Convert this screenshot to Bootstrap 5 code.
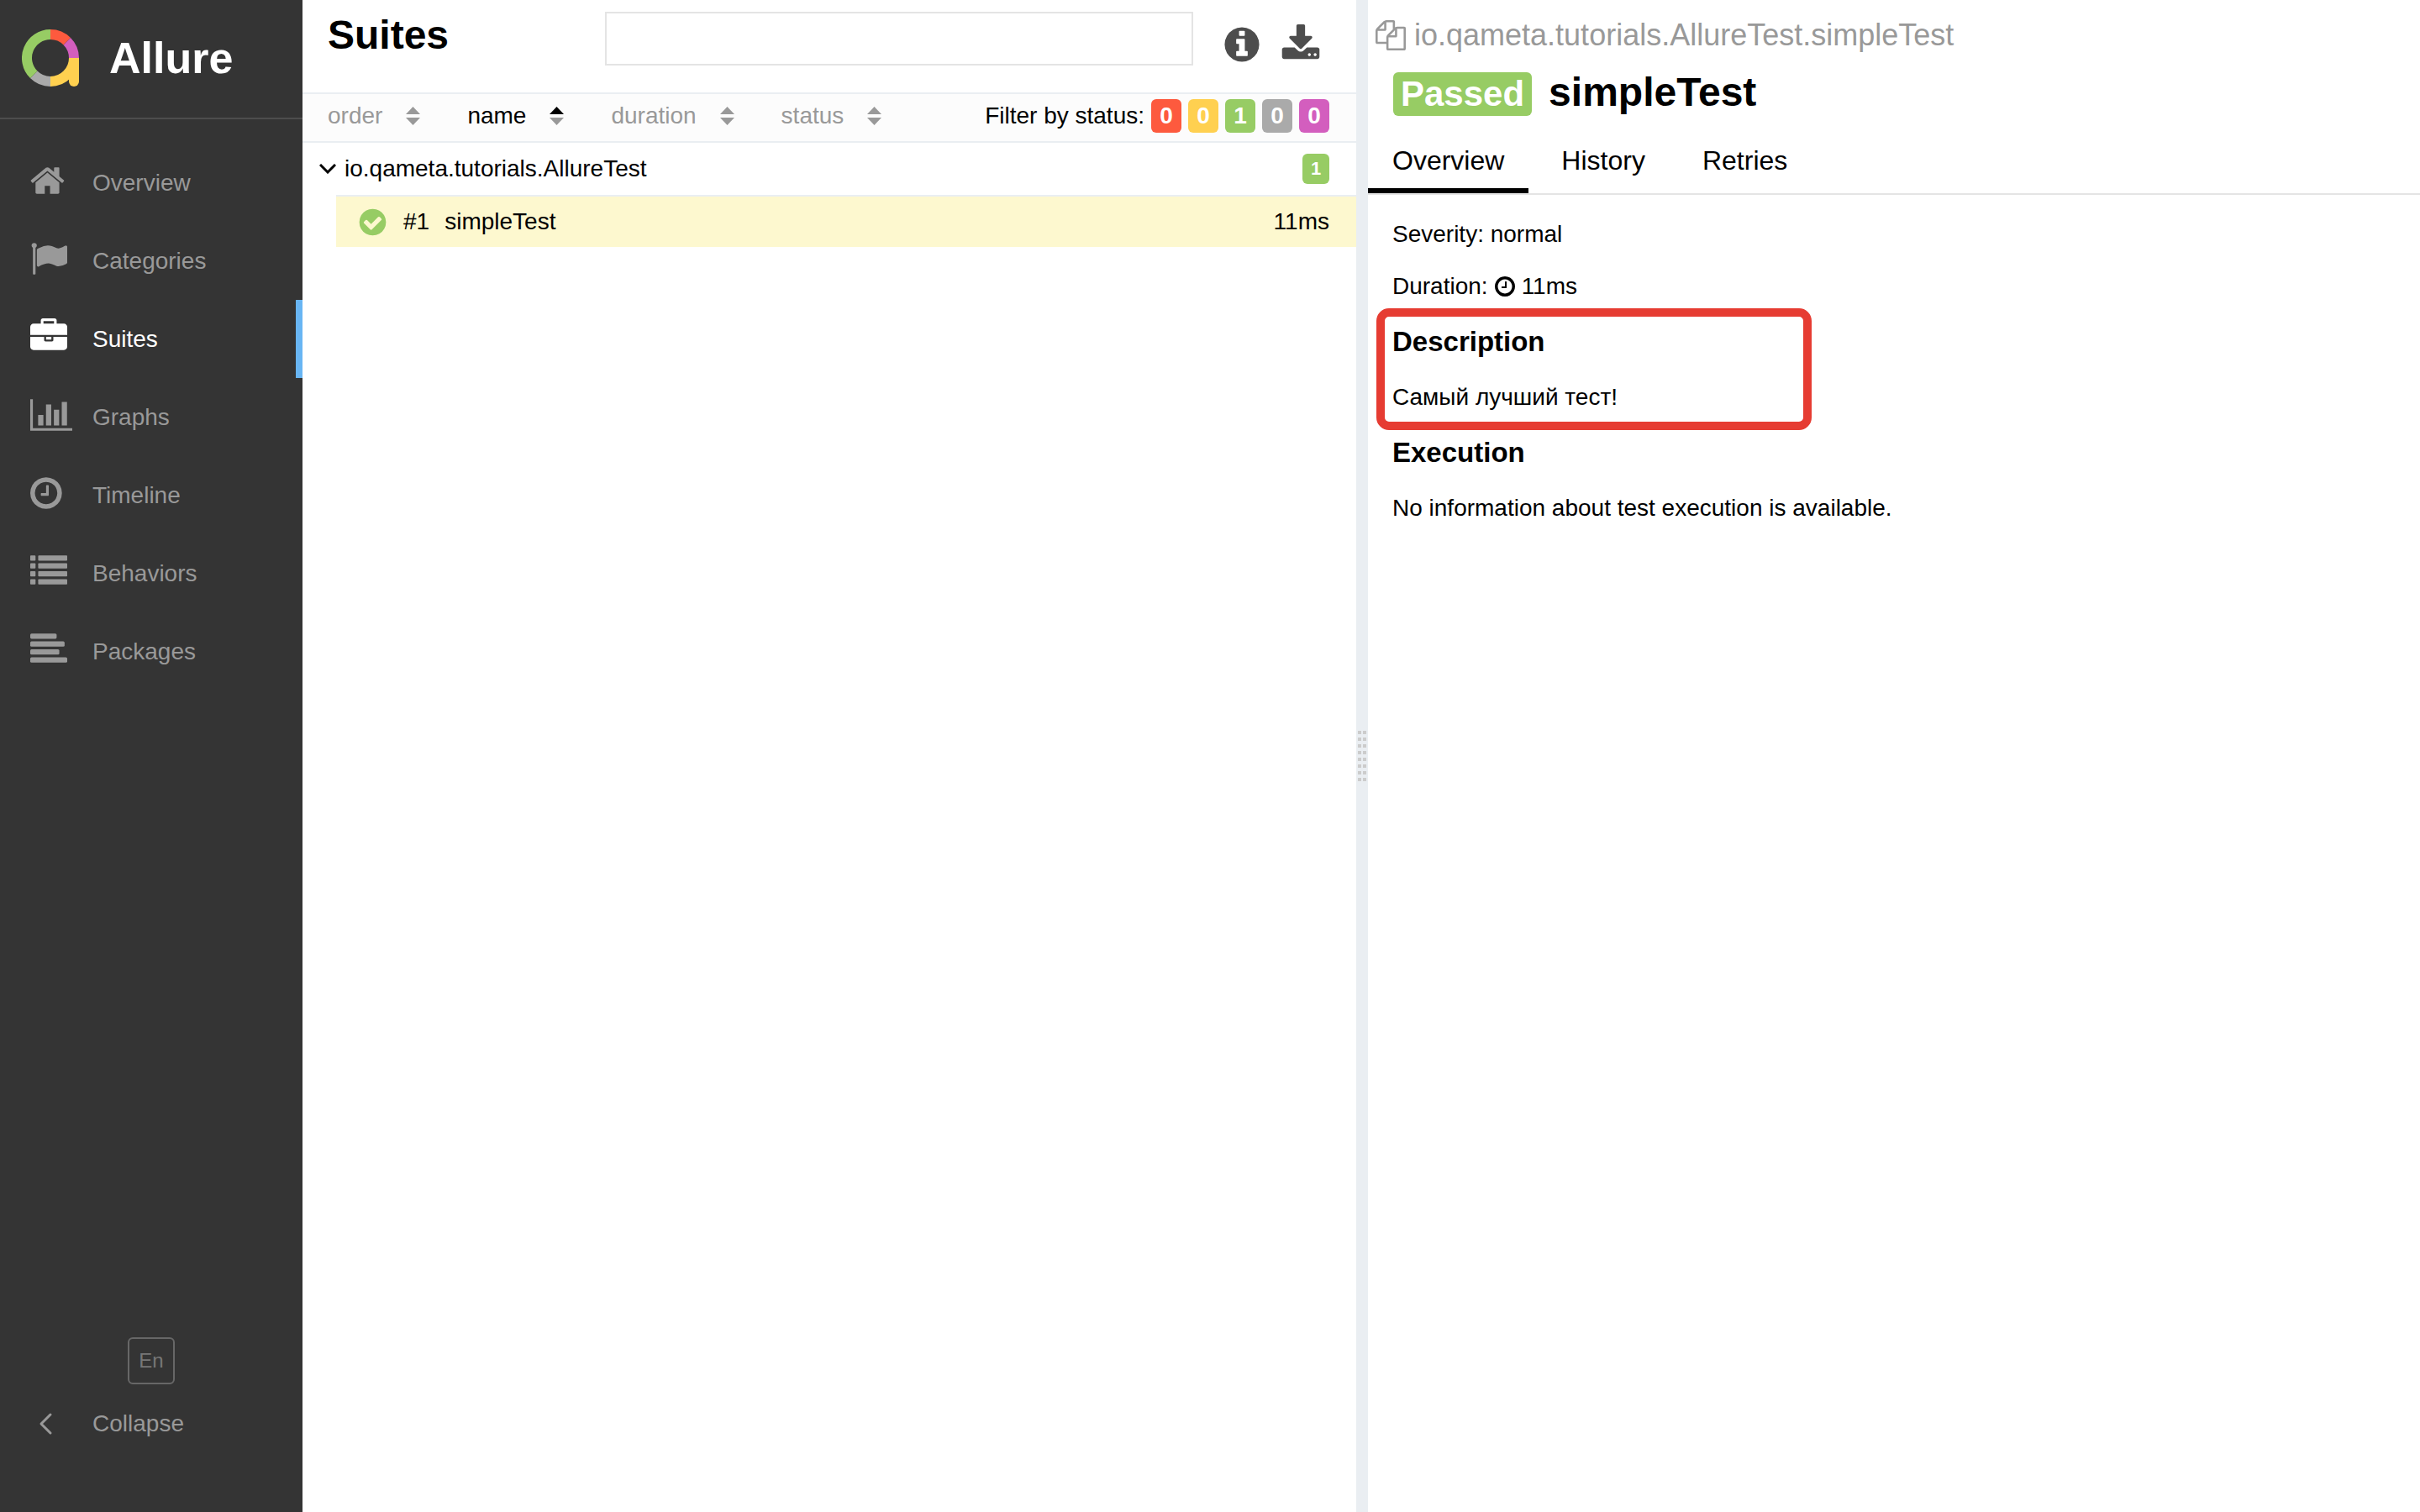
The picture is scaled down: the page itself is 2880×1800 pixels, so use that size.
<!DOCTYPE html>
<html lang="en">
<head>
<meta charset="utf-8">
<meta name="viewport" content="width=device-width, initial-scale=1">
<title>Allure Report</title>
<link rel="stylesheet" href="https://cdn.jsdelivr.net/npm/bootstrap@5.3.0/dist/css/bootstrap.min.css">
<style>
:root{--passed:#97cc64;--failed:#fd5a3e;--broken:#ffd050;--skipped:#aaa;--unknown:#d35ebe;--line:#eaeef2}
body{font-family:"Liberation Sans",Arial,sans-serif;font-size:28px;line-height:40px;color:#000;background:#fff}
h1,h2,h3,p{margin:0}
a{color:inherit;text-decoration:none}
svg{display:block;flex:none;fill:currentColor}
.side{width:360px;background:#343434;color:#999}
.brand{height:142px;border-bottom:2px solid #4d4d4d;padding:0 26px 2px;gap:36px;color:#fff;font-size:52px;font-weight:700}
.menu{padding-top:29px}
.menu-item{height:93px;padding-left:36px;color:#999;background:none;border:0;text-align:left}
.menu-item .ico{width:74px;flex:none}
.menu .ico{padding-bottom:6px}
.menu-item.active{color:#fff;border-right:8px solid #68b5f3}
.lang{width:56px;height:56px;border:2px solid #676767;border-radius:6px;background:none;color:#777;font-size:24px;line-height:24px;padding:0}
.foot{padding-bottom:59px}
.tree-pane{flex:0 0 calc(50% - 6px)}
.tree-head{height:110px;padding:14px 42px 0 30px}
.pane-title{font-size:48px;line-height:56px;font-weight:700}
.search{width:700px;height:64px;border:2px solid #e4e4e4;border-radius:0;margin-right:34px}
.tool{border:0;background:none;padding:0;color:#4d4d4d;margin-top:15px}
.tool + .tool{margin-left:22px}
.filters{height:60px;border-top:2px solid var(--line);border-bottom:2px solid var(--line);background:#fcfcfc;padding:0 32px 4px 30px}
.sorters{gap:56px}
.sorter{gap:28px;border:0;background:none;padding:0;color:#999}
.sorter.active{color:#000}
.marks{gap:8px}
.stat{border:0;border-radius:6px;color:#fff;height:40px;width:36px;padding:0;line-height:40px;font-size:28px;font-weight:700;text-align:center}
.stat-sm{height:36px;width:32px;line-height:36px;font-size:22px}
.group-row{height:62px;padding:0 32px 0 20px;gap:10px}
.test-row{height:62px;margin-left:40px;border-top:2px solid var(--line);background:#fdf8cf;padding:0 32px 0 25px;gap:18px}
.gutter{width:14px;background:var(--line);color:#ccc}
.crumb{height:82px;padding:2px 0 0 9px;gap:10px;color:#999;font-size:36px}
.case-title{padding-left:30px;height:56px;gap:20px}
.verdict{background:var(--passed);color:#fff;height:52px;line-height:52px;font-size:42px;font-weight:700;border-radius:6px;padding:0 9px}
.tabs{border-bottom:2px solid #e4e4e4;gap:10px;font-size:32px;line-height:44px}
.tab{padding:31px 29px 11px;border-bottom:6px solid transparent}
.tab.active{border-color:#000}
.details{padding:27px 29px;gap:26px}
.sub{font-size:33px;line-height:40px;font-weight:700}
.facts{gap:22px}
.noted{gap:26px}
.noted::after{content:"";position:absolute;left:-19px;top:-20px;width:518px;bottom:-19px;border:10px solid #e63c32;border-radius:15px}
</style>
</head>
<body>
<div class="d-flex min-vh-100">
  <aside class="side d-flex flex-column flex-shrink-0">
    <a href="#" class="brand d-flex align-items-center">
      <svg width="68" height="68" viewBox="0 0 68 68" aria-hidden="true">
        <g fill="none" stroke-width="12">
          <path d="M34 6A28 28 0 0 1 53.8 14.2" stroke="#fd5a3e"/>
          <path d="M53.8 14.2A28 28 0 0 1 62 34" stroke="#d35ebe"/>
          <path d="M62 34A28 28 0 0 1 34 62" stroke="#ffd050"/>
          <path d="M34 62A28 28 0 0 1 14.2 53.8" stroke="#aaa"/>
          <path d="M14.2 53.8A28 28 0 0 1 34 6" stroke="#97cc64"/>
        </g>
        <path d="M56 34h12v28a6 6 0 0 1-12 0z" fill="#ffd050"/>
      </svg>
      <span>Allure</span>
    </a>
    <nav class="menu d-flex flex-column">
      <a href="#" class="menu-item d-flex align-items-center"><span class="ico"><svg width="44" height="44" viewBox="64 0 1792 1792"><path d="M1472 992v480q0 26-19 45t-45 19h-384v-384h-256v384h-384q-26 0-45-19t-19-45v-480q0-1 .5-3t.5-3l575-474 575 474q1 2 1 6zm223-69l-62 74q-8 9-21 11h-3q-13 0-21-7l-692-577-692 577q-12 8-24 7-13-2-21-11l-62-74q-8-10-7-23.5t11-21.5l719-599q32-26 76-26t76 26l244 204v-195q0-14 9-23t23-9h192q14 0 23 9t9 23v408l219 182q10 8 11 21.5t-7 23.5z"/></svg></span>Overview</a>
      <a href="#" class="menu-item d-flex align-items-center"><span class="ico"><svg width="44" height="44" viewBox="0 0 1792 1792"><path d="M320 256q0 72-64 110v1266q0 13-9.500 22.500t-22.500 9.500h-64q-13 0-22.500-9.500t-9.500-22.500v-1266q-64-38-64-110 0-53 37.500-90.500t90.500-37.500 90.500 37.500 37.500 90.500zm1472 64v763q0 25-12.500 38.500t-39.500 27.500q-215 116-369 116-61 0-123.500-22t-108.500-48-115.500-48-142.500-22q-192 0-464 146-17 9-33 9-26 0-45-19t-19-45v-742q0-32 31-55 21-14 79-43 236-120 421-120 107 0 200 29t219 88q38 19 88 19 54 0 117.500-21t110-47 88-47 54.500-21q26 0 45 19t19 45z"/></svg></span>Categories</a>
      <a href="#" class="menu-item active d-flex align-items-center" aria-current="page"><span class="ico"><svg width="44" height="44" viewBox="0 0 1792 1792"><path d="M640 256h512v-128h-512v128zm1152 640v480q0 66-47 113t-113 47h-1472q-66 0-113-47t-47-113v-480h672v160q0 26 19 45t45 19h320q26 0 45-19t19-45v-160h672zm-768 0v128h-256v-128h256zm768-480v384h-1792v-384q0-66 47-113t113-47h352v-160q0-40 28-68t68-28h576q40 0 68 28t28 68v160h352q66 0 113 47t47 113z"/></svg></span>Suites</a>
      <a href="#" class="menu-item d-flex align-items-center"><span class="ico"><svg width="50" height="44" viewBox="0 0 2048 1792"><path d="M640 896v512h-256v-512h256zm384-512v1024h-256v-1024h256zm1024 1152v128h-2048v-1536h128v1408h1920zm-640-896v768h-256v-768h256zm384-384v1152h-256v-1152h256z"/></svg></span>Graphs</a>
      <a href="#" class="menu-item d-flex align-items-center"><span class="ico"><svg width="44" height="44" viewBox="128 0 1792 1792"><path id="clock" d="M1024 544v448q0 14-9 23t-23 9h-320q-14 0-23-9t-9-23v-64q0-14 9-23t23-9h224v-352q0-14 9-23t23-9h64q14 0 23 9t9 23zm416 352q0-148-73-273t-198-198-273-73-273 73-198 198-73 273 73 273 198 198 273 73 273-73 198-198 73-273zm224 0q0 209-103 385.500t-279.500 279.500-385.500 103-385.500-103-279.500-279.500-103-385.500 103-385.500 279.500-279.500 385.500-103 385.500 103 279.500 279.500 103 385.500z"/></svg></span>Timeline</a>
      <a href="#" class="menu-item d-flex align-items-center"><span class="ico"><svg width="44" height="44" viewBox="0 0 1792 1792"><rect y="128" width="256" height="256" rx="32"/><rect y="512" width="256" height="256" rx="32"/><rect y="896" width="256" height="256" rx="32"/><rect y="1280" width="256" height="256" rx="32"/><rect x="384" y="128" width="1408" height="256" rx="32"/><rect x="384" y="512" width="1408" height="256" rx="32"/><rect x="384" y="896" width="1408" height="256" rx="32"/><rect x="384" y="1280" width="1408" height="256" rx="32"/></svg></span>Behaviors</a>
      <a href="#" class="menu-item d-flex align-items-center"><span class="ico"><svg width="44" height="44" viewBox="0 0 1792 1792"><rect y="128" width="1280" height="256" rx="64"/><rect y="512" width="1664" height="256" rx="64"/><rect y="896" width="1408" height="256" rx="64"/><rect y="1280" width="1792" height="256" rx="64"/></svg></span>Packages</a>
    </nav>
    <div class="foot d-flex flex-column mt-auto">
      <button type="button" class="lang align-self-center">En</button>
      <button type="button" class="menu-item d-flex align-items-center"><span class="ico"><svg width="44" height="28" viewBox="0 0 44 28" aria-hidden="true"><path d="M24 3L13 14l11 11" fill="none" stroke="currentColor" stroke-width="3" stroke-linecap="round" stroke-linejoin="round"/></svg></span>Collapse</button>
    </div>
  </aside>

  <main class="d-flex flex-grow-1">
    <section class="tree-pane">
      <header class="tree-head d-flex align-items-start">
        <h1 class="pane-title me-auto">Suites</h1>
        <input type="search" class="search form-control" aria-label="Search tests">
        <button type="button" class="tool" aria-label="Information"><svg width="48" height="48" viewBox="0 0 1792 1792"><path d="M1152 1376v-160q0-14-9-23t-23-9h-96v-512q0-14-9-23t-23-9h-320q-14 0-23 9t-9 23v160q0 14 9 23t23 9h96v320h-96q-14 0-23 9t-9 23v160q0 14 9 23t23 9h448q14 0 23-9t9-23zm-128-896v-160q0-14-9-23t-23-9h-192q-14 0-23 9t-9 23v160q0 14 9 23t23 9h192q14 0 23-9t9-23zm640 416q0 209-103 385.500t-279.500 279.500-385.500 103-385.500-103-279.500-279.500-103-385.500 103-385.500 279.500-279.500 385.500-103 385.500 103 279.500 279.500 103 385.500z"/></svg></button>
        <button type="button" class="tool" aria-label="Download"><svg width="48" height="48" viewBox="0 0 1792 1792"><path d="M1344 1344q0-26-19-45t-45-19-45 19-19 45 19 45 45 19 45-19 19-45zm256 0q0-26-19-45t-45-19-45 19-19 45 19 45 45 19 45-19 19-45zm128-224v320q0 40-28 68t-68 28h-1472q-40 0-68-28t-28-68v-320q0-40 28-68t68-28h465l135 136q58 56 136 56t136-56l136-136h464q40 0 68 28t28 68zm-325-569q17 41-14 70l-448 448q-18 19-45 19t-45-19l-448-448q-31-29-14-70 17-39 59-39h256v-448q0-26 19-45t45-19h256q26 0 45 19t19 45v448h256q42 0 59 39z"/></svg></button>
      </header>
      <div class="filters d-flex align-items-center justify-content-between">
        <div class="sorters d-flex">
          <button type="button" class="sorter d-flex align-items-center">order<svg width="17" height="22" viewBox="0 0 17 22"><path d="M8.500 0L17 9H0z"/><path d="M0 13h17l-8.500 9z" fill="#999"/></svg></button>
          <button type="button" class="sorter active d-flex align-items-center">name<svg width="17" height="22" viewBox="0 0 17 22"><path d="M8.500 0L17 9H0z"/><path d="M0 13h17l-8.500 9z" fill="#999"/></svg></button>
          <button type="button" class="sorter d-flex align-items-center">duration<svg width="17" height="22" viewBox="0 0 17 22"><path d="M8.500 0L17 9H0z"/><path d="M0 13h17l-8.500 9z" fill="#999"/></svg></button>
          <button type="button" class="sorter d-flex align-items-center">status<svg width="17" height="22" viewBox="0 0 17 22"><path d="M8.500 0L17 9H0z"/><path d="M0 13h17l-8.500 9z" fill="#999"/></svg></button>
        </div>
        <div class="marks d-flex align-items-center">
          <span>Filter by status:</span>
          <button type="button" class="stat" style="background:var(--failed)">0</button>
          <button type="button" class="stat" style="background:var(--broken)">0</button>
          <button type="button" class="stat" style="background:var(--passed)">1</button>
          <button type="button" class="stat" style="background:var(--skipped)">0</button>
          <button type="button" class="stat" style="background:var(--unknown)">0</button>
        </div>
      </div>
      <div class="group-row d-flex align-items-center">
        <svg width="20" height="12" viewBox="0 0 20 12"><path d="M1 1l9 9 9-9" fill="none" stroke="#000" stroke-width="3"/></svg>
        <span class="me-auto">io.qameta.tutorials.AllureTest</span>
        <span class="stat stat-sm" style="background:var(--passed)">1</span>
      </div>
      <a href="#" class="test-row d-flex align-items-center">
        <svg width="37" height="37" viewBox="0 0 1792 1792" color="#97cc64"><path d="M1412 734q0-28-18-46l-91-90q-19-19-45-19t-45 19l-408 407-226-226q-19-19-45-19t-45 19l-91 90q-18 18-18 46 0 27 18 45l362 362q19 19 45 19 27 0 46-19l543-543q18-18 18-45zm252 162q0 209-103 385.500t-279.500 279.500-385.500 103-385.500-103-279.500-279.500-103-385.500 103-385.500 279.500-279.500 385.500-103 385.500 103 279.500 279.500 103 385.500z"/></svg>
        <span>#1</span>
        <span class="me-auto">simpleTest</span>
        <span>11ms</span>
      </a>
    </section>

    <div class="gutter d-flex align-items-center justify-content-center flex-shrink-0">
      <svg width="10" height="60" viewBox="0 0 10 60"><path d="M2 0v60M8 0v60" fill="none" stroke="currentColor" stroke-width="4" stroke-dasharray="4 4"/></svg>
    </div>

    <section class="flex-grow-1">
      <div class="crumb d-flex align-items-center">
        <svg width="36" height="36" viewBox="0 0 1792 1792"><path d="M1696 384q40 0 68 28t28 68v1216q0 40-28 68t-68 28h-960q-40 0-68-28t-28-68v-288h-544q-40 0-68-28t-28-68v-672q0-40 20-88t48-76l408-408q28-28 76-48t88-20h416q40 0 68 28t28 68v328q68-40 128-40h416zm-544 213l-299 299h299v-299zm-640-384l-299 299h299v-299zm196 647l316-316v-416h-384v416q0 40-28 68t-68 28h-416v640h512v-256q0-40 20-88t48-76zm956 804v-1152h-384v416q0 40-28 68t-68 28h-416v640h896z"/></svg>
        <span>io.qameta.tutorials.AllureTest.simpleTest</span>
      </div>
      <div class="case-title d-flex">
        <span class="verdict align-self-end">Passed</span>
        <h2 class="pane-title">simpleTest</h2>
      </div>
      <nav class="tabs d-flex">
        <a href="#" class="tab active" aria-current="page">Overview</a>
        <a href="#" class="tab">History</a>
        <a href="#" class="tab">Retries</a>
      </nav>
      <div class="details d-flex flex-column">
        <div class="facts d-flex flex-column">
          <p>Severity: normal</p>
          <p class="d-flex align-items-center gap-2">Duration: <svg width="24" height="24" viewBox="128 128 1536 1536"><use href="#clock"/></svg> 11ms</p>
        </div>
        <section class="noted position-relative d-flex flex-column">
          <h3 class="sub">Description</h3>
          <p>Самый лучший тест!</p>
        </section>
        <h3 class="sub">Execution</h3>
        <p>No information about test execution is available.</p>
      </div>
    </section>
  </main>
</div>
<script src="https://cdn.jsdelivr.net/npm/bootstrap@5.3.0/dist/js/bootstrap.bundle.min.js"></script>
</body>
</html>
